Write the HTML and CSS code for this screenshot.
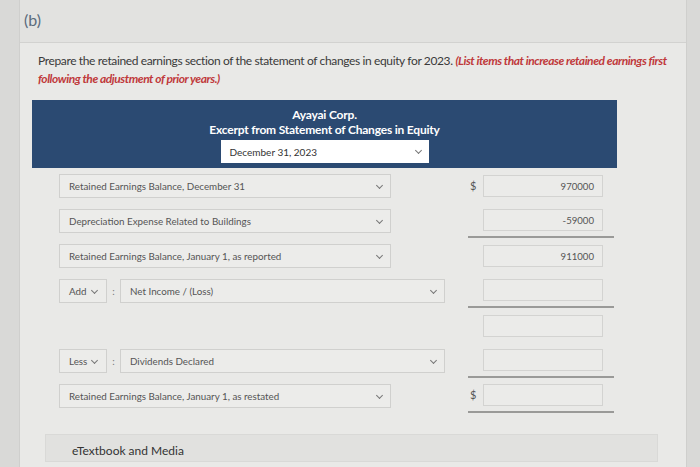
FILE: index.html
```html
<!DOCTYPE html>
<html lang="en">
<head>
    <meta charset="UTF-8">
    <title>Retained Earnings</title>
    <link rel="stylesheet" href="styles.css">
</head>
<body>
    <div class="card">
        <div class="part-head">(b)</div>

        <div class="part-body">
            <p class="intro">Prepare the retained earnings section of the statement of changes in equity for 2023. <em>(List items that increase retained earnings first</em><br><em>following the adjustment of prior years.)</em></p>

            <div class="banner">
                <div class="banner-title">Ayayai Corp.</div>
                <div class="banner-title">Excerpt from Statement of Changes in Equity</div>
                <div class="pick pick-date">December 31, 2023 <span class="chev"></span></div>
            </div>

            <div class="rows">
                <div class="row">
                    <div class="left"><div class="pick pick-item">Retained Earnings Balance, December 31 <span class="chev"></span></div></div>
                    <div class="amount"><span class="dollar">$</span><div class="box">970000</div></div>
                </div>
                <div class="row">
                    <div class="left"><div class="pick pick-item">Depreciation Expense Related to Buildings <span class="chev"></span></div></div>
                    <div class="amount ruled"><span class="dollar"></span><div class="box">-59000</div></div>
                </div>
                <div class="row">
                    <div class="left"><div class="pick pick-item">Retained Earnings Balance, January 1, as reported <span class="chev"></span></div></div>
                    <div class="amount"><span class="dollar"></span><div class="box">911000</div></div>
                </div>
                <div class="row">
                    <div class="left">
                        <div class="pick pick-op">Add <span class="chev"></span></div>
                        <span class="colon">:</span>
                        <div class="pick pick-wide">Net Income / (Loss) <span class="chev"></span></div>
                    </div>
                    <div class="amount ruled"><span class="dollar"></span><div class="box"></div></div>
                </div>
                <div class="row">
                    <div class="left"></div>
                    <div class="amount"><span class="dollar"></span><div class="box"></div></div>
                </div>
                <div class="row">
                    <div class="left">
                        <div class="pick pick-op">Less <span class="chev"></span></div>
                        <span class="colon">:</span>
                        <div class="pick pick-wide">Dividends Declared <span class="chev"></span></div>
                    </div>
                    <div class="amount ruled"><span class="dollar"></span><div class="box"></div></div>
                </div>
                <div class="row">
                    <div class="left"><div class="pick pick-item">Retained Earnings Balance, January 1, as restated <span class="chev"></span></div></div>
                    <div class="amount ruled"><span class="dollar">$</span><div class="box"></div></div>
                </div>
            </div>

            <div class="media">eTextbook and Media</div>
        </div>
    </div>
</body>
</html>
```

FILE: styles.css
```css
* {
    margin: 0;
    padding: 0;
    box-sizing: border-box;
}

body {
    background: #d9d9d7;
    font-family: Lato, "Open Sans", sans-serif;
    color: #444;
    height: 467px;
    overflow: hidden;
}

.card {
    margin-left: 19px;
    width: 668px;
    height: 467px;
    background: #e9e9e7;
    border-left: 1px solid #cfcfcd;
    border-right: 1px solid #cfcfcd;
}

.part-head {
    height: 43px;
    padding: 10px 0 0 4px;
    background: #e2e2e0;
    border-bottom: 1px solid #d2d2d0;
    font-size: 16px;
    color: #5b6b7c;
}

.part-body {
    padding: 9px 0 0 12px;
}

.intro {
    padding-left: 6px;
    width: 648px;
    font-size: 12px;
    line-height: 18px;
    color: #3a3a3a;
    letter-spacing: -0.37px;
}

.intro em {
    color: #c0393b;
    font-weight: bold;
    letter-spacing: -0.45px;
}

.banner {
    margin-top: 12px;
    width: 585px;
    height: 68px;
    padding-top: 7px;
    background: #2b4a72;
    display: flex;
    flex-direction: column;
    align-items: center;
}

.banner-title {
    font-size: 12px;
    font-weight: bold;
    line-height: 15px;
    color: #fff;
    letter-spacing: -0.2px;
}

.pick {
    position: relative;
    display: flex;
    align-items: center;
    height: 24px;
    padding-left: 9px;
    background: #ececea;
    border: 1px solid #d0d0ce;
    font-size: 9.8px;
    color: #555;
}

.chev {
    position: absolute;
    right: 8px;
    top: 8px;
    width: 5px;
    height: 5px;
    border-right: 1.3px solid #777;
    border-bottom: 1.3px solid #777;
    transform: rotate(45deg);
}

.pick-date {
    margin-top: 3px;
    width: 208px;
    height: 23px;
    background: #fff;
    border: none;
    font-size: 10px;
    color: #333;
}

.row {
    display: flex;
    height: 35px;
}

.left {
    display: flex;
    align-items: center;
    width: 436px;
    padding-left: 27px;
}

.pick-item {
    width: 332px;
}

.pick-op {
    width: 48px;
}

.pick-op .chev {
    right: 9px;
}

.colon {
    width: 13px;
    text-align: center;
    font-size: 10px;
    color: #777;
}

.pick-wide {
    width: 325px;
}

.amount {
    display: flex;
    align-items: center;
    width: 146px;
    padding-left: 2px;
}

.amount.ruled {
    border-bottom: 2px solid #9a9a98;
}

.dollar {
    width: 13px;
    font-size: 11px;
    color: #555;
}

.box {
    width: 120px;
    height: 22px;
    padding: 5px 8px 0 0;
    border: 1px solid #d3d3d1;
    background: #ebebe9;
    text-align: right;
    font-size: 9.6px;
    color: #555;
}

.media {
    margin-top: 21px;
    margin-left: 13px;
    width: 613px;
    height: 28px;
    padding: 8px 0 0 26px;
    background: #e1e1df;
    border: 1px solid #d9d9d7;
    font-size: 12px;
    color: #333;
}
```
